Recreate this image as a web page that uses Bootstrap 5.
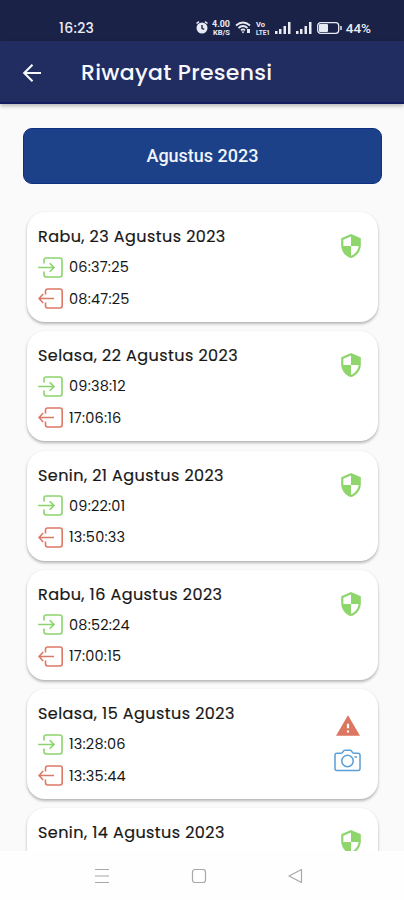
<!DOCTYPE html>
<html lang="id">
<head>
<meta charset="utf-8">
<meta name="viewport" content="width=device-width, initial-scale=1">
<title>Riwayat Presensi</title>
<link href="https://cdn.jsdelivr.net/npm/bootstrap@5.3.0/dist/css/bootstrap.min.css" rel="stylesheet">
<style>
body{font-family:Poppins,Inter,"Noto Sans",sans-serif;background:#fafafa;color:#161616;height:900px}
.status{height:41px;background:#1b2247;color:#e9ebf3;padding:14px 33px 0 59px;font-size:14px;font-weight:500;line-height:28px}
.status .clock{letter-spacing:.3px}
.status .pct{font:500 13.5px/28px Roboto,sans-serif;letter-spacing:0}
.appbar{height:63px;background:#212c60;color:#f7f8fc;border-bottom:2px solid #111c61;padding:2px 0 0 22px;box-shadow:0 2px 4px rgba(0,0,0,.28);z-index:2}
.appbar h1{font-size:22px;font-weight:500;margin:0 0 0 39px;letter-spacing:.3px;line-height:30px}
.month{height:56px;margin:24px 22px 0 23px;background:#1c4188;border:1px solid #0c2f80;border-radius:9px;color:#f0f4fb;font:500 18px/1 Roboto,sans-serif;letter-spacing:0}
.month:hover{background:#1c4188;color:#f0f4fb}
.entries{padding:28px 26px 0 27px;gap:9.3px}
.entry{height:110px;flex:none;background:#fff;border:0;border-radius:18px;box-shadow:0 2px 3px rgba(0,0,0,.27),0 0 2px rgba(0,0,0,.06);padding:12px 17px 0 11px}
.entry h2{font-size:16px;font-weight:400;line-height:26px;margin:0;letter-spacing:.43px;-webkit-text-stroke:.2px currentColor}
.time{font-size:14.5px;line-height:22px;gap:6px;letter-spacing:.2px}
.time.in{margin-top:6px}.time.out{margin-top:9.5px}
.time svg{width:25px;height:21px}
.in svg{color:#8bd46c}.out svg{color:#dc7866}
.shield{color:#8ed66c;width:20px;height:24px;margin:10px 0 0}
.warn{color:#dc7660;width:24px;height:21px;margin:14px 0 0}
.cam{color:#5a9fd8;width:27px;height:23px;margin-top:13px}
.sysnav{height:49px;background:#fefefe;color:#a8a8a8;padding:0 101px 0 94px}
.status svg,.entry svg,.sysnav svg{flex:none}
</style>
</head>
<body class="d-flex flex-column overflow-hidden m-0">
<svg class="d-none" xmlns="http://www.w3.org/2000/svg">
<symbol id="in" viewBox="0 0 25 21"><path d="M6 6.500V3.200Q6 1 8.200 1H21.800Q24 1 24 3.200V17.800Q24 20 21.800 20H8.200Q6 20 6 17.800V14.500M.2 10.500H16M11.700 6.200 16 10.500 11.700 14.800" fill="none" stroke="currentColor" stroke-width="1.600"/></symbol>
<symbol id="out" viewBox="0 0 25 21"><path d="M7.500 6.500V3.200Q7.500 1 9.700 1H22Q24.200 1 24.200 3.200V17.800Q24.200 20 22 20H9.700Q7.500 20 7.500 17.800V14.500M16 10.500H1M5.200 6 1 10.500 5.200 15" fill="none" stroke="currentColor" stroke-width="1.600"/></symbol>
<symbol id="shield" viewBox="3 1 18 22"><path fill="currentColor" d="M12 1 3 5v6c0 5.550 3.840 10.740 9 12 5.160-1.260 9-6.450 9-12V5zm0 10.990h7c-.53 4.120-3.280 7.790-7 8.940V12H5V6.300l7-3.110z"/></symbol>
<symbol id="warn" viewBox="1 2 22 19"><path fill="currentColor" d="M1 21h22L12 2zm12-3h-2v-2h2zm0-4h-2v-4h2z"/></symbol>
<symbol id="cam" viewBox="0 0 27 23"><g fill="none" stroke="currentColor" stroke-width="1.500"><path d="M3 4.200h4.200q1 0 1.500-1 .8-1.900 2.300-1.900h5q1.500 0 2.300 1.900.5 1 1.500 1H24q2 0 2 2v13.300q0 2-2 2H3q-2 0-2-2V6.200q0-2 2-2z"/><circle cx="13.500" cy="12" r="5.700"/><path d="M20.500 8h2.500"/></g></symbol>
<symbol id="signal" viewBox="0 0 17 12"><path fill="currentColor" d="M0 9h2.500v3H0zM4 7h2.500v5H4zM8.500 4H11v8H8.500zM13 0h2.500v12H13z"/></symbol>
</svg>

<header class="status d-flex justify-content-between flex-shrink-0">
<span class="clock">16:23</span>
<div class="d-flex align-items-center" style="gap:4px">
<svg width="12" height="13" viewBox="0 0 12 13"><circle cx="6" cy="7" r="5.500" fill="currentColor"/><path d="M.5 2.500 3 .6M11.500 2.500 9 .6" stroke="currentColor" stroke-width="1.500"/><path d="M6 4v3.300l2.200 1" fill="none" stroke="#1b2247" stroke-width="1.400"/></svg>
<svg width="19" height="16" viewBox="0 0 19 16" overflow="visible" font-family="Roboto,sans-serif" font-weight="700" fill="currentColor"><text x="0" y="7" font-size="8.500" textLength="18" lengthAdjust="spacingAndGlyphs">4.00</text><text x="1" y="15" font-size="6.500" textLength="17" lengthAdjust="spacingAndGlyphs">KB/S</text></svg>
<svg width="17" height="13" viewBox="0 0 17 13"><path d="M1 4.500q7-6 14 0M3.500 7q4.500-4 9 0M6 9.300q2-1.800 4 0" fill="none" stroke="currentColor" stroke-width="1.700"/><path d="M8 12.500 6.500 10.500h3zM12 8h3v4h-3z" fill="currentColor"/></svg>
<svg width="15" height="16" viewBox="0 0 15 16" overflow="visible" font-family="Roboto,sans-serif" font-weight="700" fill="currentColor"><text x="0" y="6.500" font-size="6.500" textLength="9" lengthAdjust="spacingAndGlyphs">Vo</text><text x="0" y="14.500" font-size="6.500" textLength="14" lengthAdjust="spacingAndGlyphs">LTE1</text></svg>
<svg width="17" height="12"><use href="#signal"/></svg>
<svg width="17" height="12"><use href="#signal"/></svg>
<svg width="25" height="12" viewBox="0 0 25 12"><rect x=".7" y=".7" width="21" height="10.600" rx="3" fill="none" stroke="currentColor" stroke-width="1.300"/><rect x="2" y="2" width="9" height="8" rx="1" fill="currentColor"/><path d="M24 4v4" stroke="currentColor" stroke-width="1.500"/></svg>
<span class="pct">44%</span>
</div>
</header>
<nav class="appbar d-flex align-items-center flex-shrink-0 position-relative">
<svg width="20" height="20" viewBox="0 0 20 20" fill="none" stroke="currentColor" stroke-width="2.100"><path d="M19 10H2.500M10.500 1.700 2.200 10l8.300 8.300"/></svg>
<h1>Riwayat Presensi</h1>
</nav>
<main class="flex-grow-1 overflow-hidden d-flex flex-column">
<button class="month btn flex-shrink-0">Agustus 2023</button>
<section class="entries d-flex flex-column">
<article class="entry card flex-row justify-content-between">
<div><h2>Rabu, 23 Agustus 2023</h2><div class="time in d-flex align-items-center"><svg><use href="#in"/></svg><span>06:37:25</span></div><div class="time out d-flex align-items-center"><svg><use href="#out"/></svg><span>08:47:25</span></div></div>
<div><svg class="shield"><use href="#shield"/></svg></div>
</article>
<article class="entry card flex-row justify-content-between">
<div><h2>Selasa, 22 Agustus 2023</h2><div class="time in d-flex align-items-center"><svg><use href="#in"/></svg><span>09:38:12</span></div><div class="time out d-flex align-items-center"><svg><use href="#out"/></svg><span>17:06:16</span></div></div>
<div><svg class="shield"><use href="#shield"/></svg></div>
</article>
<article class="entry card flex-row justify-content-between">
<div><h2>Senin, 21 Agustus 2023</h2><div class="time in d-flex align-items-center"><svg><use href="#in"/></svg><span>09:22:01</span></div><div class="time out d-flex align-items-center"><svg><use href="#out"/></svg><span>13:50:33</span></div></div>
<div><svg class="shield"><use href="#shield"/></svg></div>
</article>
<article class="entry card flex-row justify-content-between">
<div><h2>Rabu, 16 Agustus 2023</h2><div class="time in d-flex align-items-center"><svg><use href="#in"/></svg><span>08:52:24</span></div><div class="time out d-flex align-items-center"><svg><use href="#out"/></svg><span>17:00:15</span></div></div>
<div><svg class="shield"><use href="#shield"/></svg></div>
</article>
<article class="entry card flex-row justify-content-between">
<div><h2>Selasa, 15 Agustus 2023</h2><div class="time in d-flex align-items-center"><svg><use href="#in"/></svg><span>13:28:06</span></div><div class="time out d-flex align-items-center"><svg><use href="#out"/></svg><span>13:35:44</span></div></div>
<div class="d-flex flex-column align-items-center"><svg class="warn"><use href="#warn"/></svg><svg class="cam"><use href="#cam"/></svg></div>
</article>
<article class="entry card flex-row justify-content-between">
<div><h2>Senin, 14 Agustus 2023</h2></div>
<div><svg class="shield"><use href="#shield"/></svg></div>
</article>
</section>
</main>
<footer class="sysnav d-flex align-items-center justify-content-between flex-shrink-0">
<svg width="16" height="16" viewBox="0 0 16 16" stroke="currentColor" stroke-width="1.200"><path d="M1 1.500h14M1 8h14M1 14.500h14"/></svg>
<svg width="16" height="16" viewBox="0 0 16 16" fill="none" stroke="currentColor" stroke-width="1.200"><rect x="1.500" y="1.500" width="13" height="13" rx="2.500"/></svg>
<svg width="15" height="16" viewBox="0 0 15 16" fill="none" stroke="currentColor" stroke-width="1.200" stroke-linejoin="round"><path d="M13.500 1.500v13L1 8z"/></svg>
</footer>
<script src="https://cdn.jsdelivr.net/npm/bootstrap@5.3.0/dist/js/bootstrap.bundle.min.js"></script>
</body>
</html>
